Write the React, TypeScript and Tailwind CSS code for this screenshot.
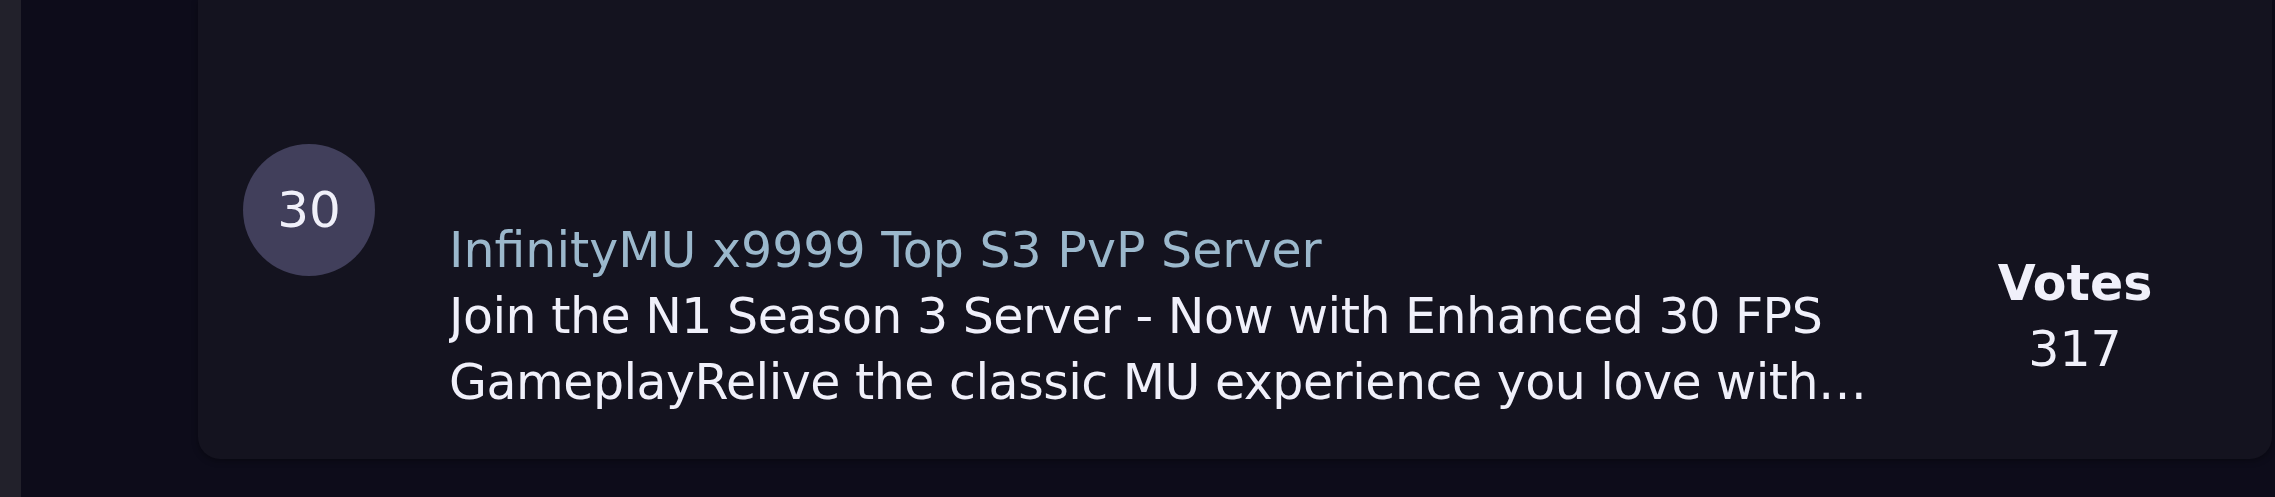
import React from 'react';

interface ServerRowProps {
  rank: number;
  name: string;
  description: string;
  votes: number;
}

const ServerRow: React.FC<ServerRowProps> = ({ rank, name, description, votes }) => {
  return (
    <div className="flex-1 mr-[3px] mb-[38px] bg-[#14131f] rounded-b-[22px] shadow-[0_2px_6px_rgba(0,0,0,0.35)] pl-[45px] pr-[47px] pt-[144px] pb-[44px] flex items-start">
      {/* Rank badge */}
      <div className="w-[132px] h-[132px] shrink-0 rounded-full bg-[#413f5b] flex items-center justify-center text-[50px] text-[#f0f0fa]">
        {rank}
      </div>

      <div className="flex-1 min-w-0 ml-[74px] mt-[74px] flex items-center gap-[24px]">
        {/* Name and description */}
        <div className="w-[1452px] shrink-0 text-[49px] leading-[66px]">
          <div className="text-[#9bb8cc] truncate">{name}</div>
          <p className="text-[#f0f0fa] line-clamp-2 tracking-[-0.5px]">{description}</p>
        </div>

        {/* Votes */}
        <div className="w-[300px] shrink-0 flex flex-col items-center text-[49px] leading-[66px] text-[#f0f0fa]">
          <span className="font-bold">Votes</span>
          <span>{votes}</span>
        </div>
      </div>
    </div>
  );
};

export default function App() {
  return (
    <div
      className="w-[2275px] h-[497px] overflow-hidden flex bg-[#0d0c1a]"
      style={{ fontFamily: '"DejaVu Sans", Verdana, sans-serif' }}
    >
      <div className="w-[21px] shrink-0 bg-[#22212b]" />
      <div className="flex-1 flex pl-[177px]">
        <ServerRow
          rank={30}
          name="InfinityMU x9999 Top S3 PvP Server"
          description="Join the N1 Season 3 Server - Now with Enhanced 30 FPS GameplayRelive the classic MU experience you love with the smoothest gameplay ever"
          votes={317}
        />
      </div>
    </div>
  );
}
